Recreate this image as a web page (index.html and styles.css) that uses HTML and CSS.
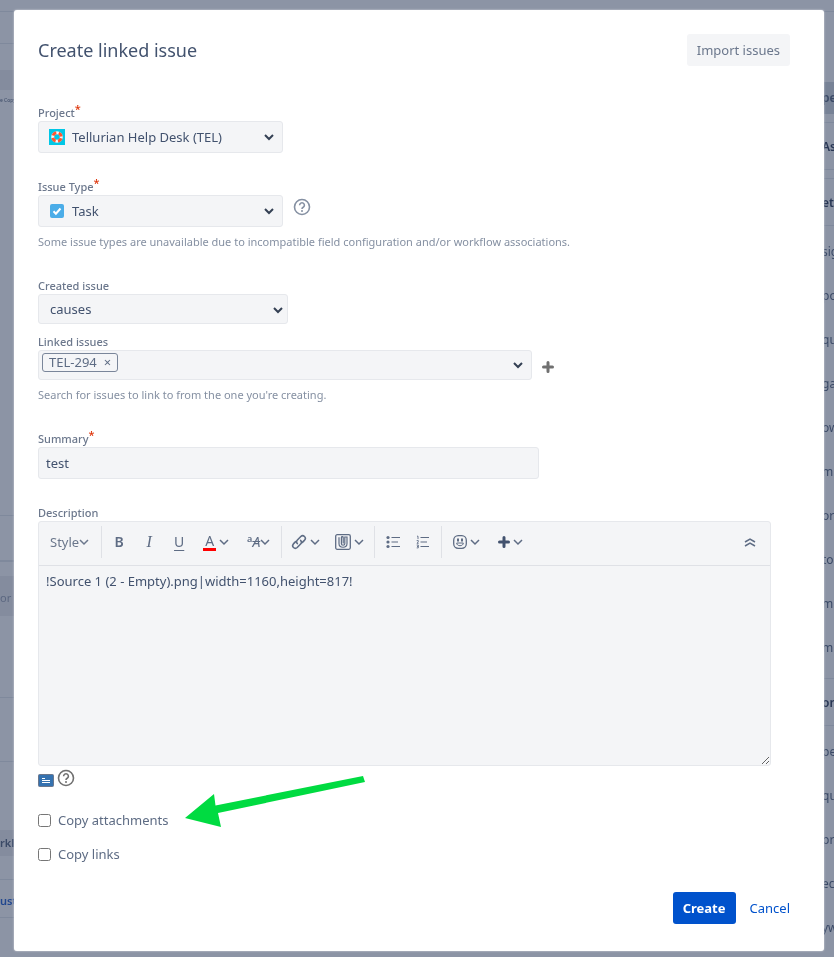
FILE: index.html
```
<!DOCTYPE html>
<html lang="en">
<head>
<meta charset="UTF-8">
<title>Create linked issue</title>
<link rel="stylesheet" href="styles.css">
</head>
<body>

<!-- shared icons -->
<svg class="defs" aria-hidden="true">
  <symbol id="chevron" viewBox="0 0 10 10"><path d="M1 3l4 4 4-4" fill="none" stroke="currentColor" stroke-width="2"/></symbol>
  <symbol id="caret" viewBox="0 0 10 10"><path d="M1 3l4 4 4-4" fill="none" stroke="currentColor" stroke-width="1.5"/></symbol>
  <symbol id="help" viewBox="0 0 18 18">
    <circle cx="9" cy="9" r="7.5" fill="none" stroke="currentColor" stroke-width="1.6"/>
    <path d="M6.6 7.2a2.4 2.4 0 1 1 3.6 2.1Q9 10 9 11" fill="none" stroke="currentColor" stroke-width="1.6"/>
    <circle cx="9" cy="13" r="1" fill="currentColor"/>
  </symbol>
  <symbol id="plus" viewBox="0 0 12 12"><path d="M6 1.500v9M1.500 6h9" stroke="currentColor" stroke-width="3" stroke-linecap="round"/></symbol>
</svg>

<div class="page" aria-hidden="true">
  <div class="page-left">
    <div class="strip h-12"></div>
    <div class="strip h-32"></div>
    <div class="gap-26"></div>
    <div class="tint h-20"></div>
    <div class="tiny">e Copy</div>
    <div class="strip activity"></div>
    <div class="strip thick h-46"></div>
    <div class="gap-14"></div>
    <div class="tint h-40 muted">or</div>
    <div class="strip h-82"></div>
    <div class="strip h-64"></div>
    <div class="gap-68"></div>
    <div class="tint h-26 heading">rkl</div>
    <div class="strip h-24"></div>
    <div class="strip h-38 link">ust</div>
  </div>
  <div class="page-right">
    <div class="strip h-12"></div>
    <div class="gap-70"></div>
    <div class="tint dark h-32 heading">pe</div>
    <div class="panel-gap"></div>
    <div class="panel-title">As</div>
    <div class="panel-gap"></div>
    <div class="panel-title">eta</div>
    <ul class="facts">
      <li>sig</li>
      <li>po</li>
      <li>qu</li>
      <li>ga</li>
      <li>ow</li>
      <li>m</li>
      <li>or</li>
      <li>to</li>
      <li>m</li>
      <li>mp</li>
    </ul>
    <div class="panel-gap"></div>
    <div class="panel-title">on</div>
    <ul class="facts">
      <li>pe</li>
      <li>qu</li>
      <li>pr</li>
      <li>ec</li>
      <li>yw</li>
    </ul>
  </div>
</div>

<form class="dialog" role="dialog" aria-labelledby="dialog-title">
  <header class="dialog-header">
    <h1 id="dialog-title">Create linked issue</h1>
    <button type="button" class="btn btn-default">Import issues</button>
  </header>

  <div class="field">
    <label for="project">Project<sup>*</sup></label>
    <div class="select medium with-icon">
      <svg class="select-icon" viewBox="0 0 16 16">
        <rect width="16" height="16" fill="#00c7e6"/>
        <circle cx="8" cy="8" r="4.3" fill="none" stroke="#f4f5f7" stroke-width="3"/>
        <circle cx="8" cy="8" r="4.3" fill="none" stroke="#ff5630" stroke-width="3" stroke-dasharray="4.2 2.55" stroke-dashoffset="-1.3"/>
      </svg>
      <select id="project"><option>Tellurian Help Desk (TEL)</option></select>
      <svg class="select-arrow"><use href="#chevron"/></svg>
    </div>
  </div>

  <div class="field">
    <label for="issue-type">Issue Type<sup>*</sup></label>
    <div class="row">
      <div class="select medium with-icon">
        <svg class="select-icon" viewBox="0 0 16 16">
          <rect x="1" y="1" width="14" height="14" rx="2" fill="#4bade8"/>
          <path d="M4.5 8.3l2.4 2.4 4.6-5.2" fill="none" stroke="#fff" stroke-width="2"/>
        </svg>
        <select id="issue-type"><option>Task</option></select>
        <svg class="select-arrow"><use href="#chevron"/></svg>
      </div>
      <button type="button" class="icon-btn type-help" aria-label="Get help about issue types"><svg class="icon-18"><use href="#help"/></svg></button>
    </div>
    <p class="hint">Some issue types are unavailable due to incompatible field configuration and/or workflow associations.</p>
  </div>

  <div class="field">
    <label for="link-type">Created issue</label>
    <div class="select link-type">
      <select id="link-type"><option>causes</option></select>
      <svg class="select-arrow"><use href="#chevron"/></svg>
    </div>
  </div>

  <div class="field close">
    <label for="linked">Linked issues</label>
    <div class="row">
      <div class="picker">
        <span class="chip">TEL-294 <button type="button" aria-label="Remove TEL-294">×</button></span>
        <input id="linked" type="text">
        <svg class="select-arrow"><use href="#chevron"/></svg>
      </div>
      <button type="button" class="icon-btn add-issue" aria-label="Add issue"><svg class="icon-12"><use href="#plus"/></svg></button>
    </div>
    <p class="hint">Search for issues to link to from the one you're creating.</p>
  </div>

  <div class="field">
    <label for="summary">Summary<sup>*</sup></label>
    <input id="summary" class="text" type="text" value="test">
  </div>

  <div class="field description">
    <label for="description">Description</label>
    <div class="editor">
      <div class="toolbar">
        <div class="group">
          <button type="button" class="tool style">Style<svg class="caret"><use href="#caret"/></svg></button>
        </div>
        <div class="group letters">
          <button type="button" class="tool bold">B</button>
          <button type="button" class="tool italic">I</button>
          <button type="button" class="tool underline">U</button>
          <button type="button" class="tool"><span class="color">A</span><svg class="caret"><use href="#caret"/></svg></button>
          <button type="button" class="tool effects"><small>a</small><span class="more">A</span><svg class="caret"><use href="#caret"/></svg></button>
        </div>
        <div class="group inserts">
          <button type="button" class="tool" aria-label="Link">
            <svg class="icon-16" viewBox="0 0 16 16"><g fill="none" stroke="currentColor" stroke-width="1.6" stroke-linecap="round"><path d="M6.3 9.6c-1-1.2-.9-2.6.1-3.6l3.4-3.5c2.5-2.3 6 1 3.8 3.6L11.4 8.4"/><path d="M9.7 6.4c1 1.2.9 2.6-.1 3.6l-3.4 3.5c-2.5 2.3-6-1-3.8-3.6l2.2-2.3"/></g></svg>
            <svg class="caret"><use href="#caret"/></svg>
          </button>
          <button type="button" class="tool" aria-label="Attachment">
            <svg class="icon-16" viewBox="0 0 16 16"><g fill="none" stroke="currentColor"><rect x=".7" y=".7" width="14.6" height="14.6" rx="1.5" stroke-width="1.3"/><path stroke-width="1.2" d="M4 3.2v6.3c0 5 8 5 8 0V3H9.8v6.7c0 2-3.4 2-3.4 0V3.4c0-1 1.8-1 1.8 0v6"/></g></svg>
            <svg class="caret"><use href="#caret"/></svg>
          </button>
        </div>
        <div class="group lists">
          <button type="button" class="tool" aria-label="Bullet list">
            <svg class="icon-14" viewBox="0 0 14 14"><path d="M5.5 2.5H14M5.5 7H12M5.5 11.5H14" stroke="currentColor" stroke-width="1.2"/><g fill="currentColor"><circle cx="2" cy="2.5" r="1.6"/><circle cx="2" cy="7" r="1.6"/><circle cx="2" cy="11.5" r="1.6"/></g></svg>
          </button>
          <button type="button" class="tool" aria-label="Numbered list">
            <svg class="icon-14" viewBox="0 0 14 14"><path d="M4.5 2.5H13M4.5 7H11M4.5 11.5H13" stroke="currentColor" stroke-width="1.2"/><path d="M1 1.2h1v2.9M.7 5.6h1.6v1.2L1 8.3h1.6M.7 10h1.6v1.4H1.2h1.1v1.5H.7" fill="none" stroke="currentColor" stroke-width=".9"/></svg>
          </button>
        </div>
        <div class="group extras">
          <button type="button" class="tool" aria-label="Emoji">
            <svg class="icon-14" viewBox="0 0 14 14"><rect x=".7" y=".7" width="12.6" height="12.6" rx="4.5" fill="none" stroke="currentColor" stroke-width="1.3"/><path d="M4 3.5h2v3H4zM8 3.5h2v3H8z" fill="currentColor"/><path d="M3.7 8h6.6c0 3.6-6.6 3.6-6.6 0z" fill="none" stroke="currentColor"/></svg>
            <svg class="caret"><use href="#caret"/></svg>
          </button>
          <button type="button" class="tool" aria-label="Insert">
            <svg class="icon-12 strong"><use href="#plus"/></svg>
            <svg class="caret"><use href="#caret"/></svg>
          </button>
        </div>
        <button type="button" class="tool collapse" aria-label="Show less">
          <svg class="icon-12" viewBox="0 0 12 12"><path d="M1 6l5-3 5 3M1 10l5-3 5 3" fill="none" stroke="currentColor" stroke-width="1.5"/></svg>
        </button>
      </div>
      <textarea id="description" spellcheck="false">!Source 1 (2 - Empty).png|width=1160,height=817!</textarea>
    </div>
    <div class="editor-links">
      <button type="button" class="icon-btn" aria-label="Preview">
        <svg class="preview" viewBox="0 0 16 13"><rect x=".5" y=".5" width="15" height="12" rx="1" fill="#3572b0" stroke="#6b778c"/><path d="M4 4.500h3M4 6.500h8M4 8.500h8" stroke="#fff"/></svg>
      </button>
      <button type="button" class="icon-btn wiki-help" aria-label="Get help about formatting"><svg class="icon-18"><use href="#help"/></svg></button>
    </div>
  </div>

  <div class="checks">
    <div class="check">
      <input type="checkbox" id="copy-attachments">
      <label for="copy-attachments">Copy attachments</label>
      <svg class="pointer" viewBox="0 0 182 52"><path d="M1 42L30 18l1.500 11.500L179 0l2 6L34 37l3 14z" fill="#00db41"/></svg>
    </div>
    <div class="check">
      <input type="checkbox" id="copy-links">
      <label for="copy-links">Copy links</label>
    </div>
  </div>

  <footer class="dialog-footer">
    <button type="submit" class="btn btn-primary">Create</button>
    <a href="#" class="cancel">Cancel</a>
  </footer>
</form>

</body>
</html>
```
FILE: styles.css
```
* {
  box-sizing: border-box;
}

body {
  margin: 0;
  padding: 10px 10px 6px 14px;
  background: #8c94a5;
  color: #42526e;
  font-family: 'Segoe UI', 'Noto Sans', sans-serif;
  font-size: 13px;
  line-height: 20px;
}

button,
input,
select,
textarea {
  font: inherit;
  color: inherit;
}

.defs {
  position: absolute;
  width: 0;
  height: 0;
}

/* dimmed page behind the dialog */
.page {
  position: fixed;
  inset: 0;
  display: flex;
  justify-content: space-between;
  overflow: hidden;
  color: #3a4966;
  font-size: 12px;
  white-space: nowrap;
}

.page-left {
  width: 20px;
  font-size: 11px;
}

.page-right {
  width: 12px;
}

.strip {
  border-bottom: 1px solid #7f899c;
}

.thick {
  border-bottom-width: 2px;
}

.tint {
  background: #848c9e;
}

.dark {
  background: #778296;
}

.h-12 { height: 12px; }
.h-20 { height: 20px; }
.h-24 { height: 24px; }
.h-26 { height: 26px; line-height: 26px; }
.h-32 { height: 32px; line-height: 32px; }
.h-38 { height: 38px; line-height: 42px; }
.h-40 { height: 40px; line-height: 44px; }
.h-46 { height: 46px; }
.h-64 { height: 64px; }
.h-82 { height: 82px; }
.gap-14 { height: 14px; }
.gap-26 { height: 26px; }
.gap-68 { height: 68px; }
.gap-70 { height: 70px; }

.activity {
  height: 406px;
}

.tiny {
  height: 20px;
  font-size: 5px;
}

.muted {
  color: #5b6780;
}

.heading {
  font-weight: 600;
}

.link {
  color: #21478f;
  font-weight: 600;
}

.panel-gap {
  height: 9px;
  border-bottom: 1px solid #7f899c;
}

.panel-title {
  height: 47px;
  line-height: 47px;
  border-bottom: 1px solid #7f899c;
  color: #273553;
  font-weight: 600;
}

.facts {
  margin: 0;
  padding: 4px 0 0;
  list-style: none;
}

.facts li {
  height: 44px;
  line-height: 44px;
}

/* dialog */
.dialog {
  position: relative;
  padding: 24px 34px 27px 24px;
  border-radius: 3px;
  background: #fff;
  box-shadow: 0 0 2px #dfe1e6;
}

.dialog-header {
  display: flex;
  align-items: center;
  justify-content: space-between;
  margin-bottom: 39px;
}

h1 {
  margin: 0;
  font-size: 18px;
  font-weight: 400;
}

.btn {
  height: 32px;
  padding: 0 10px;
  border: 0;
  border-radius: 3px;
}

.btn-default {
  background: #f4f5f7;
  color: #6b778c;
}

.btn-primary {
  background: #0052cc;
  color: #fff;
  font-weight: 700;
}

.field {
  margin-bottom: 26px;
}

.description {
  margin-bottom: 23px;
}

.field label {
  display: block;
  color: #6b778c;
  font-size: 11px;
  font-weight: 500;
  line-height: 16px;
}

sup {
  color: #de350b;
  font-size: 11px;
  line-height: 0;
  vertical-align: 4px;
}

.row {
  display: flex;
  align-items: center;
}

.hint {
  margin: 7px 0 28px;
  color: #8590a2;
  font-size: 11px;
  line-height: 16px;
}

.select,
.picker,
.text,
.editor {
  border: 1px solid #e6e8ec;
  border-radius: 3px;
  background: #f4f5f7;
}

.select {
  position: relative;
  height: 32px;
}

.select select {
  width: 100%;
  height: 100%;
  padding: 0 24px 0 11px;
  border: 0;
  background: transparent;
  appearance: none;
}

.with-icon select {
  padding-left: 33px;
}

.select-icon {
  position: absolute;
  top: 7px;
  left: 10px;
  width: 16px;
  height: 16px;
}

.select-arrow {
  width: 10px;
  height: 10px;
  color: #344054;
}

.select .select-arrow {
  position: absolute;
  top: 10px;
  right: 8px;
  pointer-events: none;
}

.medium {
  width: 245px;
}

.link-type {
  width: 250px;
  height: 30px;
}

.link-type .select-arrow {
  right: 4px;
}

.close {
  margin-top: -16px;
}

.icon-btn {
  display: flex;
  padding: 0;
  border: 0;
  background: none;
  color: #8590a2;
}

.icon-12 { width: 12px; height: 12px; }
.icon-14 { width: 14px; height: 14px; }
.icon-16 { width: 16px; height: 16px; }
.icon-18 { width: 18px; height: 18px; }

.type-help {
  margin: 0 0 8px 10px;
}

.picker {
  display: flex;
  align-items: center;
  width: 494px;
  height: 30px;
  padding: 0 8px 0 3px;
}

.picker input {
  flex: 1;
  min-width: 0;
  border: 0;
  background: transparent;
}

.chip {
  display: flex;
  align-items: center;
  gap: 7px;
  height: 19px;
  margin-bottom: 6px;
  padding: 0 6px;
  border: 1px solid #7a869a;
  border-radius: 3px;
  color: #5e6c84;
}

.chip button {
  padding: 0;
  border: 0;
  background: none;
  line-height: 16px;
}

.add-issue {
  margin: 4px 0 0 10px;
  color: #707070;
}

.text {
  width: 501px;
  height: 32px;
  padding: 0 7px;
}

.editor {
  width: 733px;
  max-width: 100%;
}

.toolbar {
  display: flex;
  align-items: center;
  height: 44px;
  padding: 2px 14px 5px 11px;
  border-bottom: 1px solid #dfe1e6;
  color: #5e6c84;
}

.group {
  display: flex;
  align-items: center;
  height: 32px;
  border-right: 1px solid #dfe1e6;
}

.tool {
  display: flex;
  align-items: center;
  gap: 3px;
  padding: 0;
  border: 0;
  background: none;
}

.style {
  gap: 0;
  padding-right: 12px;
  color: #6b778c;
}

.caret {
  width: 10px;
  height: 10px;
}

.letters {
  gap: 18px;
  padding: 0 11px;
  font-size: 14px;
}

.letters .tool {
  min-width: 12px;
  justify-content: center;
}

.bold {
  font-weight: 600;
}

.italic {
  font-family: 'Liberation Serif', serif;
  font-size: 16px;
  font-style: italic;
}

.underline {
  text-decoration: underline;
  text-underline-offset: 3px;
}

.color {
  padding: 0 2px;
  border-bottom: 3px solid #f00;
  line-height: 15px;
}

.more {
  font-style: italic;
  text-decoration: line-through;
}

.effects small {
  align-self: flex-start;
  font-size: 9px;
  font-weight: 600;
  line-height: 14px;
}

.letters .effects {
  gap: 0;
}

.inserts {
  gap: 15px;
  padding: 0 10px 0 9px;
}

.lists {
  gap: 16px;
  padding: 0 11px;
}

.extras {
  gap: 18px;
  padding-left: 11px;
  border-right: 0;
}

.strong {
  color: #42526e;
}

.collapse {
  margin-left: auto;
}

textarea {
  display: block;
  width: 100%;
  height: 199px;
  padding: 5px 7px;
  border: 0;
  background: transparent;
  resize: vertical;
}

.editor-links {
  display: flex;
  align-items: flex-start;
  gap: 3px;
  padding-top: 3px;
}

.preview {
  width: 16px;
  height: 13px;
  margin-top: 5px;
}

.wiki-help {
  color: #707070;
}

.checks {
  display: grid;
  gap: 14px;
  margin-bottom: 28px;
  color: #5e6c84;
}

.check {
  position: relative;
  display: flex;
  align-items: center;
  gap: 7px;
}

.check input {
  width: 13px;
  height: 13px;
  margin: 0;
}

.pointer {
  position: absolute;
  top: -34px;
  left: 146px;
  width: 182px;
  height: 52px;
}

.dialog-footer {
  display: flex;
  align-items: center;
  justify-content: flex-end;
  gap: 14px;
}

.cancel {
  color: #0052cc;
  text-decoration: none;
}
```
